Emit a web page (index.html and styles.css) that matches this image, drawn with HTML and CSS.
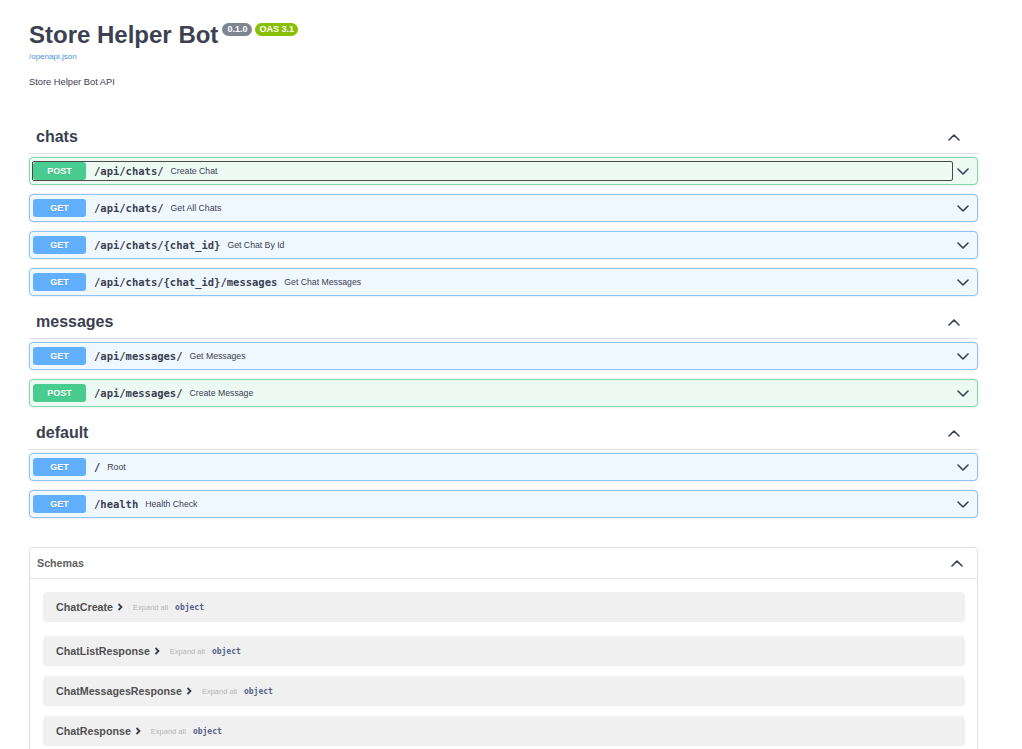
FILE: index.html
```html
<!DOCTYPE html>
<html>
<head>
<meta charset="utf-8">
<title>Store Helper Bot</title>
<link rel="stylesheet" href="styles.css">
</head>
<body>
<div class="wrap">
  <div class="info">
    <div class="title-row">
      <h2 class="title">Store Helper Bot</h2>
      <span class="pill pill-ver">0.1.0</span>
      <span class="pill pill-oas">OAS 3.1</span>
    </div>
    <a class="url" href="#">/openapi.json</a>
    <p class="desc">Store Helper Bot API</p>
  </div>

  <div class="tag-section first-tag">
    <h3 class="tag"><span>chats</span><svg class="arrow" width="12" height="7" viewBox="0 0 12 7"><polyline points="1,6 6,1 11,6"/></svg></h3>
    <div class="opblock post">
      <div class="control focused"><span class="method">POST</span><span class="path">/api/chats/</span><span class="summary">Create Chat</span></div>
      <svg class="chev" width="12" height="7" viewBox="0 0 12 7"><polyline points="1,1 6,6 11,1"/></svg>
    </div>
    <div class="opblock get">
      <div class="control"><span class="method">GET</span><span class="path">/api/chats/</span><span class="summary">Get All Chats</span></div>
      <svg class="chev" width="12" height="7" viewBox="0 0 12 7"><polyline points="1,1 6,6 11,1"/></svg>
    </div>
    <div class="opblock get">
      <div class="control"><span class="method">GET</span><span class="path">/api/chats/{chat_id}</span><span class="summary">Get Chat By Id</span></div>
      <svg class="chev" width="12" height="7" viewBox="0 0 12 7"><polyline points="1,1 6,6 11,1"/></svg>
    </div>
    <div class="opblock get">
      <div class="control"><span class="method">GET</span><span class="path">/api/chats/{chat_id}/messages</span><span class="summary">Get Chat Messages</span></div>
      <svg class="chev" width="12" height="7" viewBox="0 0 12 7"><polyline points="1,1 6,6 11,1"/></svg>
    </div>
  </div>

  <div class="tag-section">
    <h3 class="tag"><span>messages</span><svg class="arrow" width="12" height="7" viewBox="0 0 12 7"><polyline points="1,6 6,1 11,6"/></svg></h3>
    <div class="opblock get">
      <div class="control"><span class="method">GET</span><span class="path">/api/messages/</span><span class="summary">Get Messages</span></div>
      <svg class="chev" width="12" height="7" viewBox="0 0 12 7"><polyline points="1,1 6,6 11,1"/></svg>
    </div>
    <div class="opblock post">
      <div class="control"><span class="method">POST</span><span class="path">/api/messages/</span><span class="summary">Create Message</span></div>
      <svg class="chev" width="12" height="7" viewBox="0 0 12 7"><polyline points="1,1 6,6 11,1"/></svg>
    </div>
  </div>

  <div class="tag-section">
    <h3 class="tag"><span>default</span><svg class="arrow" width="12" height="7" viewBox="0 0 12 7"><polyline points="1,6 6,1 11,6"/></svg></h3>
    <div class="opblock get">
      <div class="control"><span class="method">GET</span><span class="path">/</span><span class="summary">Root</span></div>
      <svg class="chev" width="12" height="7" viewBox="0 0 12 7"><polyline points="1,1 6,6 11,1"/></svg>
    </div>
    <div class="opblock get">
      <div class="control"><span class="method">GET</span><span class="path">/health</span><span class="summary">Health Check</span></div>
      <svg class="chev" width="12" height="7" viewBox="0 0 12 7"><polyline points="1,1 6,6 11,1"/></svg>
    </div>
  </div>

  <section class="models">
    <div class="models-head"><span>Schemas</span><svg class="arrow" width="12" height="7" viewBox="0 0 12 7"><polyline points="1,6 6,1 11,6"/></svg></div>
    <div class="models-body">
      <div class="model first"><span class="mname">ChatCreate</span><svg class="mchev" width="6" height="8" viewBox="0 0 6 8"><polyline points="1.5,1 4.5,4 1.5,7"/></svg><span class="expand">Expand all</span><span class="mtype">object</span></div>
      <div class="model"><span class="mname">ChatListResponse</span><svg class="mchev" width="6" height="8" viewBox="0 0 6 8"><polyline points="1.5,1 4.5,4 1.5,7"/></svg><span class="expand">Expand all</span><span class="mtype">object</span></div>
      <div class="model"><span class="mname">ChatMessagesResponse</span><svg class="mchev" width="6" height="8" viewBox="0 0 6 8"><polyline points="1.5,1 4.5,4 1.5,7"/></svg><span class="expand">Expand all</span><span class="mtype">object</span></div>
      <div class="model"><span class="mname">ChatResponse</span><svg class="mchev" width="6" height="8" viewBox="0 0 6 8"><polyline points="1.5,1 4.5,4 1.5,7"/></svg><span class="expand">Expand all</span><span class="mtype">object</span></div>
    </div>
  </section>
</div>
</body>
</html>
```

FILE: styles.css
```css
html, body {
  margin: 0;
  padding: 0;
  background: #fff;
  overflow: hidden;
}
body {
  font-family: "Liberation Sans", Arial, sans-serif;
  color: #3b4151;
}
.wrap {
  width: 949px;
  margin-left: 29px;
  padding-top: 21px;
}
.title-row {
  display: flex;
  align-items: flex-start;
}
.title {
  margin: 0;
  font-size: 24px;
  line-height: 28px;
  font-weight: bold;
  color: #3b4151;
}
.pill {
  display: inline-block;
  margin-top: 2px;
  height: 13px;
  line-height: 13px;
  padding: 0 5px;
  border-radius: 7px;
  font-size: 9px;
  font-weight: bold;
  color: #fff;
}
.pill-ver {
  margin-left: 4px;
  background: #7d8492;
}
.pill-oas {
  margin-left: 3px;
  background: #89bf04;
  padding: 0 4px;
}
.url {
  display: block;
  margin-top: 3px;
  font-size: 8px;
  line-height: 10px;
  color: #4990e2;
  text-decoration: none;
}
.desc {
  margin: 14px 0 0;
  font-size: 9.3px;
  line-height: 12px;
}
.first-tag {
  margin-top: 33px;
}
.tag-section + .tag-section {
  padding-top: 1px;
}
.tag {
  margin: 0 0 3px;
  height: 32px;
  border-bottom: 1px solid #dcdee2;
  display: flex;
  align-items: center;
  justify-content: space-between;
  padding: 0 18px 0 7px;
  font-size: 16px;
  font-weight: bold;
  color: #3b4151;
}
.arrow polyline, .chev polyline {
  fill: none;
  stroke: #3b4151;
  stroke-width: 1.6;
  stroke-linecap: round;
  stroke-linejoin: round;
}
.opblock {
  box-sizing: border-box;
  height: 28px;
  margin-bottom: 9px;
  border: 1px solid;
  border-radius: 4px;
  box-shadow: 0 0 3px rgba(0,0,0,.12);
  display: flex;
  align-items: center;
  padding: 0 8px 0 2px;
}
.opblock.get {
  border-color: #8cc4fb;
  background: #eff7ff;
}
.opblock.post {
  border-color: #7fdab0;
  background: #edfaf4;
}
.control {
  flex: 1;
  box-sizing: border-box;
  height: 20px;
  border: 1px solid transparent;
  border-radius: 2px;
  display: flex;
  align-items: center;
  margin-right: 4px;
}
.control.focused {
  border-color: #4a4a4a;
}
.method {
  width: 53px;
  height: 18px;
  line-height: 18px;
  border-radius: 3px;
  text-align: center;
  font-size: 9px;
  font-weight: bold;
  color: #fff;
  text-shadow: 0 1px 0 rgba(0,0,0,.1);
}
.get .method { background: #61affe; }
.post .method { background: #49cc90; }
.path {
  margin-left: 8px;
  font-family: "DejaVu Sans Mono", monospace;
  font-weight: bold;
  font-size: 10.5px;
  color: #3b4151;
}
.summary {
  margin-left: 7px;
  font-size: 8.7px;
  color: #3b4151;
}
.models {
  margin-top: 29px;
  border: 1px solid #dfe0e3;
  border-radius: 4px;
  height: 300px;
}
.models-head {
  height: 30px;
  border-bottom: 1px solid #e4e5e7;
  display: flex;
  align-items: center;
  justify-content: space-between;
  padding: 0 14px 0 7px;
  font-size: 10.7px;
  font-weight: bold;
  color: #606060;
}
.models-body {
  padding: 13px 12px 0 13px;
}
.model {
  height: 30px;
  margin-bottom: 10px;
  border-radius: 4px;
  background: #f0f0f0;
  display: flex;
  align-items: center;
  padding-left: 13px;
}
.model.first {
  margin-bottom: 14px;
}
.mname {
  font-size: 10.7px;
  font-weight: bold;
  color: #505050;
}
.mchev {
  margin-left: 4px;
}
.mchev polyline {
  fill: none;
  stroke: #3b4151;
  stroke-width: 1.8;
}
.expand {
  margin-left: 10px;
  font-size: 7.5px;
  color: #b5b4b4;
}
.mtype {
  margin-left: 7px;
  font-family: "DejaVu Sans Mono", monospace;
  font-weight: bold;
  font-size: 8px;
  color: #55608a;
}
```
